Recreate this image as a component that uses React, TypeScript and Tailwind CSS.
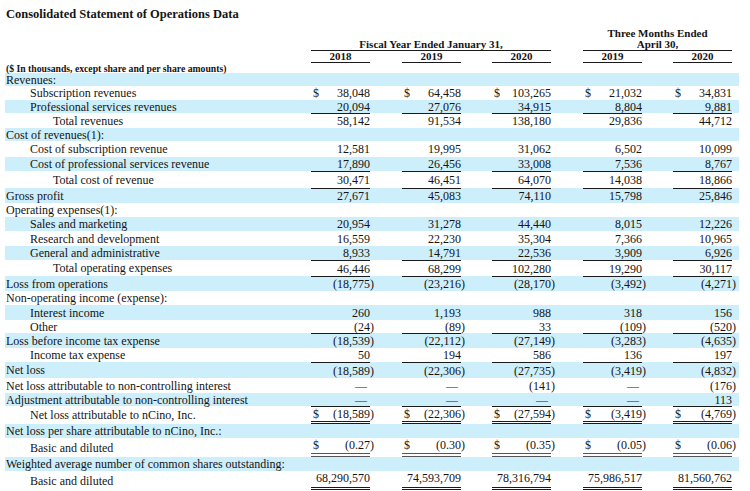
import React from "react";

type Row = {
  label: string;
  lvl: 0 | 1 | 2;
  h: string;
  vals?: string[];
  dollar?: boolean;
  top?: boolean;
  bottom?: "double" | "gray";
};

const rows: Row[] = [
  { label: "Revenues:", lvl: 0, h: "h-[13px]" },
  { label: "Subscription revenues", lvl: 1, h: "h-[14px]", dollar: true, vals: ["38,048", "64,458", "103,265", "21,032", "34,831"] },
  { label: "Professional services revenues", lvl: 1, h: "h-[13px]", vals: ["20,094", "27,076", "34,915", "8,804", "9,881"] },
  { label: "Total revenues", lvl: 2, h: "h-[15px]", top: true, vals: ["58,142", "91,534", "138,180", "29,836", "44,712"] },
  { label: "Cost of revenues(1):", lvl: 0, h: "h-[13px]" },
  { label: "Cost of subscription revenue", lvl: 1, h: "h-[16px]", vals: ["12,581", "19,995", "31,062", "6,502", "10,099"] },
  { label: "Cost of professional services revenue", lvl: 1, h: "h-[14px]", vals: ["17,890", "26,456", "33,008", "7,536", "8,767"] },
  { label: "Total cost of revenue", lvl: 2, h: "h-[17px]", top: true, vals: ["30,471", "46,451", "64,070", "14,038", "18,866"] },
  { label: "Gross profit", lvl: 0, h: "h-[15px]", top: true, vals: ["27,671", "45,083", "74,110", "15,798", "25,846"] },
  { label: "Operating expenses(1):", lvl: 0, h: "h-[14px]" },
  { label: "Sales and marketing", lvl: 1, h: "h-[14px]", vals: ["20,954", "31,278", "44,440", "8,015", "12,226"] },
  { label: "Research and development", lvl: 1, h: "h-[15px]", vals: ["16,559", "22,230", "35,304", "7,366", "10,965"] },
  { label: "General and administrative", lvl: 1, h: "h-[14px]", vals: ["8,933", "14,791", "22,536", "3,909", "6,926"] },
  { label: "Total operating expenses", lvl: 2, h: "h-[16px]", top: true, vals: ["46,446", "68,299", "102,280", "19,290", "30,117"] },
  { label: "Loss from operations", lvl: 0, h: "h-[15px]", top: true, vals: ["(18,775)", "(23,216)", "(28,170)", "(3,492)", "(4,271)"] },
  { label: "Non-operating income (expense):", lvl: 0, h: "h-[14px]" },
  { label: "Interest income", lvl: 1, h: "h-[15px]", vals: ["260", "1,193", "988", "318", "156"] },
  { label: "Other", lvl: 1, h: "h-[13px]", vals: ["(24)", "(89)", "33", "(109)", "(520)"] },
  { label: "Loss before income tax expense", lvl: 0, h: "h-[15px]", top: true, vals: ["(18,539)", "(22,112)", "(27,149)", "(3,283)", "(4,635)"] },
  { label: "Income tax expense", lvl: 1, h: "h-[14px]", vals: ["50", "194", "586", "136", "197"] },
  { label: "Net loss", lvl: 0, h: "h-[16px]", top: true, vals: ["(18,589)", "(22,306)", "(27,735)", "(3,419)", "(4,832)"] },
  { label: "Net loss attributable to non-controlling interest", lvl: 0, h: "h-[15px]", vals: ["—", "—", "(141)", "—", "(176)"] },
  { label: "Adjustment attributable to non-controlling interest", lvl: 0, h: "h-[13px]", vals: ["—", "—", "—", "—", "113"] },
  { label: "Net loss attributable to nCino, Inc.", lvl: 1, h: "h-[18px]", top: true, bottom: "double", dollar: true, vals: ["(18,589)", "(22,306)", "(27,594)", "(3,419)", "(4,769)"] },
  { label: "Net loss per share attributable to nCino, Inc.:", lvl: 0, h: "h-[14px]" },
  { label: "Basic and diluted", lvl: 1, h: "h-[19px]", bottom: "gray", dollar: true, vals: ["(0.27)", "(0.30)", "(0.35)", "(0.05)", "(0.06)"] },
  { label: "Weighted average number of common shares outstanding:", lvl: 0, h: "h-[14px]" },
  { label: "Basic and diluted", lvl: 1, h: "h-[19px]", bottom: "double", vals: ["68,290,570", "74,593,709", "78,316,794", "75,986,517", "81,560,762"] },
];

const margins = ["ml-0", "ml-[32px]", "ml-[31px]", "ml-[32px]", "ml-[31px]"];
const indents = ["pl-[1px]", "pl-[25px]", "pl-[48px]"];

function Value({ v }: { v: string }) {
  if (v === "—") return <span className="mr-[3px]">—</span>;
  if (v.endsWith(")")) {
    return (
      <span className="whitespace-nowrap">
        {v.slice(0, -1)}
        <span className="inline-block w-0">)</span>
      </span>
    );
  }
  return <span className="whitespace-nowrap">{v}</span>;
}

function Cell({ v, i, row }: { v: string; i: number; row: Row }) {
  const cls = [
    "w-[59px] flex justify-between",
    row.bottom ? "items-start pt-[1px]" : "items-center",
    margins[i],
    row.top ? "border-t border-[#1a1a1a]" : "",
    row.bottom === "double" ? "border-b-[3px] border-double border-[#1a1a1a]" : "",
    row.bottom === "gray" ? "border-b-[4px] border-double border-[#555]" : "",
  ].join(" ");
  return (
    <div className={cls}>
      <span className="pl-[2px]">{row.dollar ? "$" : ""}</span>
      <Value v={v} />
    </div>
  );
}

export default function App() {
  return (
    <div className="w-[750px] h-[491px] overflow-hidden bg-white text-[#141414] font-['Liberation_Serif',serif]">
      <div className="pl-[6px] pt-[7px] h-[24px] text-[12.5px] leading-[15px] font-bold">
        Consolidated Statement of Operations Data
      </div>
      {/* group headers */}
      <div className="flex mx-[5px] h-[27px] items-end text-[11px] font-bold">
        <div className="w-[306px]" />
        <div className="w-[240px] border-b border-[#1a1a1a] text-center leading-[12px]">
          Fiscal Year Ended January 31,
        </div>
        <div className="w-[32px]" />
        <div className="w-[149px] border-b border-[#1a1a1a] text-center leading-[11px]">
          <div>Three Months Ended</div>
          <div>April 30,</div>
        </div>
      </div>
      {/* years */}
      <div className="flex mx-[5px] h-[12px] text-[11px] font-bold leading-[11px]">
        <div className="w-[306px]" />
        {["2018", "2019", "2020", "2019", "2020"].map((y, i) => (
          <div key={i} className={`w-[59px] text-center border-b border-[#1a1a1a] ${margins[i]}`}>
            {y}
          </div>
        ))}
      </div>
      <div className="pl-[6px] h-[10px] text-[9.7px] leading-[10px] font-bold pt-[1px] whitespace-nowrap">
        ($ In thousands, except share and per share amounts)
      </div>
      {/* body */}
      <div className="mx-[5px] w-[734px] text-[12px] leading-[12px]">
        {rows.map((r, idx) => (
          <div key={idx} className={`flex ${r.h} ${idx % 2 === 0 ? "bg-[#cdeefb]" : ""}`}>
            <div className={`w-[306px] flex items-center whitespace-nowrap ${indents[r.lvl]}`}>{r.label}</div>
            {r.vals && r.vals.map((v, i) => <Cell key={i} v={v} i={i} row={r} />)}
          </div>
        ))}
      </div>
    </div>
  );
}
